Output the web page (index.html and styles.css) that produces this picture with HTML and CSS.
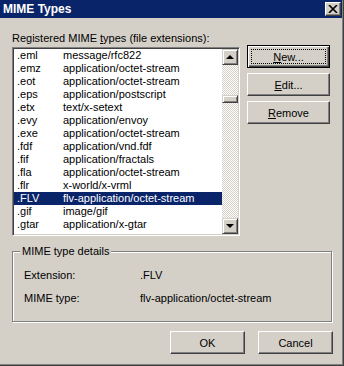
FILE: index.html
```html
<!DOCTYPE html>
<html>
<head>
  <title>MIME Types</title>
  <link rel="stylesheet" href="styles.css">
</head>
<body>
  <div class="window">
    <div class="titlebar">
      <span class="title">MIME Types</span>
      <span class="close-btn">
        <svg width="10" height="8" viewBox="0 0 10 8"><path d="M1 0 L9 8 M9 0 L1 8" stroke="#000" stroke-width="1.6" fill="none"/></svg>
      </span>
    </div>
    <div class="dialog">
      <div class="list-label">Registered MIME <u>t</u>ypes (file extensions):</div>
      <div class="main-row">
        <div class="listbox">
          <div class="rows">
            <div class="row"><span class="ext">.eml</span><span>message/rfc822</span></div>
            <div class="row"><span class="ext">.emz</span><span>application/octet-stream</span></div>
            <div class="row"><span class="ext">.eot</span><span>application/octet-stream</span></div>
            <div class="row"><span class="ext">.eps</span><span>application/postscript</span></div>
            <div class="row"><span class="ext">.etx</span><span>text/x-setext</span></div>
            <div class="row"><span class="ext">.evy</span><span>application/envoy</span></div>
            <div class="row"><span class="ext">.exe</span><span>application/octet-stream</span></div>
            <div class="row"><span class="ext">.fdf</span><span>application/vnd.fdf</span></div>
            <div class="row"><span class="ext">.fif</span><span>application/fractals</span></div>
            <div class="row"><span class="ext">.fla</span><span>application/octet-stream</span></div>
            <div class="row"><span class="ext">.flr</span><span>x-world/x-vrml</span></div>
            <div class="row selected"><span class="ext">.FLV</span><span>flv-application/octet-stream</span></div>
            <div class="row"><span class="ext">.gif</span><span>image/gif</span></div>
            <div class="row"><span class="ext">.gtar</span><span>application/x-gtar</span></div>
          </div>
          <div class="scrollbar">
            <div class="sb-btn"><span class="arrow-up"></span></div>
            <div class="sb-track"><div class="sb-thumb"></div></div>
            <div class="sb-btn"><span class="arrow-down"></span></div>
          </div>
        </div>
        <div class="side-buttons">
          <div class="btn default"><span class="focus"><u>N</u>ew...</span></div>
          <div class="btn"><span><u>E</u>dit...</span></div>
          <div class="btn"><span><u>R</u>emove</span></div>
        </div>
      </div>
      <div class="group">
        <span class="legend">MIME type details</span>
        <div class="detail"><span class="detail-label">Extension:</span><span>.FLV</span></div>
        <div class="detail"><span class="detail-label">MIME type:</span><span>flv-application/octet-stream</span></div>
      </div>
      <div class="footer">
        <div class="btn wide">OK</div>
        <div class="btn wide">Cancel</div>
      </div>
    </div>
  </div>
</body>
</html>
```

FILE: styles.css
```css
body {
  margin: 0;
  padding: 0;
  font-family: "Liberation Sans", Arial, sans-serif;
  font-size: 11px;
  color: #000;
  background-color: #d4d0c8;
}

.window {
  width: 344px;
  height: 366px;
  box-sizing: border-box;
  padding-right: 1px;
  background-color: #d4d0c8;
  border-right: 1px solid #404040;
  border-bottom: 1px solid #404040;
  box-shadow: inset -1px -1px #808080;
  display: flex;
  flex-direction: column;
}

.titlebar {
  height: 18px;
  background-color: #0a246a;
  display: flex;
  justify-content: space-between;
  align-items: center;
  padding-left: 3px;
  padding-right: 1px;
}

.title {
  color: #fff;
  font-weight: bold;
  font-size: 12px;
}

.close-btn {
  width: 14px;
  height: 12px;
  background-color: #d4d0c8;
  border: 1px solid;
  border-color: #fff #404040 #404040 #fff;
  box-shadow: inset -1px -1px #808080;
  display: flex;
  align-items: center;
  justify-content: center;
}

.close-btn svg {
  display: block;
  margin-left: -1px;
}

.dialog {
  padding: 14px 12px 0 12px;
}

.list-label {
  line-height: 13px;
  margin-bottom: 2px;
}

.main-row {
  display: flex;
  gap: 7px;
}

.listbox {
  width: 229px;
  height: 189px;
  box-sizing: border-box;
  border: 1px solid;
  border-color: #808080 #fff #fff #808080;
  box-shadow: inset 1px 1px #404040, inset -1px -1px #d4d0c8;
  padding: 1px;
  display: flex;
  background-color: #fff;
}

.rows {
  flex: 1;
  overflow: hidden;
  background-color: #fff;
}

.row {
  display: flex;
  height: 13px;
  line-height: 13px;
  padding-left: 3px;
  white-space: nowrap;
}

.row .ext {
  width: 46px;
}

.row.selected {
  background-color: #0a246a;
  color: #fff;
}

.scrollbar {
  width: 16px;
  display: flex;
  flex-direction: column;
}

.sb-btn {
  height: 16px;
  box-sizing: border-box;
  background-color: #d4d0c8;
  border: 1px solid;
  border-color: #d4d0c8 #404040 #404040 #d4d0c8;
  box-shadow: inset 1px 1px #fff, inset -1px -1px #808080;
  display: flex;
  align-items: center;
  justify-content: center;
}

.arrow-up {
  width: 0;
  height: 0;
  border-left: 4px solid transparent;
  border-right: 4px solid transparent;
  border-bottom: 4px solid #000;
}

.arrow-down {
  width: 0;
  height: 0;
  border-left: 4px solid transparent;
  border-right: 4px solid transparent;
  border-top: 4px solid #000;
}

.sb-track {
  flex: 1;
  background-color: #fff;
  background-image: conic-gradient(#d4d0c8 25%, #fff 0 50%, #d4d0c8 0 75%, #fff 0);
  background-size: 2px 2px;
  padding-top: 30px;
}

.sb-thumb {
  height: 8px;
  box-sizing: border-box;
  background-color: #d4d0c8;
  border: 1px solid;
  border-color: #d4d0c8 #404040 #404040 #d4d0c8;
  box-shadow: inset 1px 1px #fff, inset -1px -1px #808080;
}

.side-buttons {
  display: flex;
  flex-direction: column;
  gap: 5px;
  margin-top: -2px;
}

.btn {
  width: 83px;
  height: 23px;
  box-sizing: border-box;
  background-color: #d4d0c8;
  border: 1px solid;
  border-color: #fff #404040 #404040 #fff;
  box-shadow: inset -1px -1px #808080;
  display: flex;
  align-items: center;
  justify-content: center;
}

.btn.default {
  border: 1px solid #000;
  box-shadow: inset 1px 1px #fff, inset -1px -1px #404040, inset -2px -2px #808080;
}

.btn .focus {
  flex: 1;
  align-self: stretch;
  margin: 3px;
  border: 1px dotted #000;
  display: flex;
  align-items: center;
  justify-content: center;
}

.group {
  position: relative;
  margin-top: 15px;
  width: 320px;
  height: 71px;
  box-sizing: border-box;
  border: 1px solid #808080;
  box-shadow: inset 1px 1px #fff, 1px 1px #fff;
  padding: 17px 0 0 11px;
}

.legend {
  position: absolute;
  top: -7px;
  left: 7px;
  padding: 0 2px;
  line-height: 13px;
  background-color: #d4d0c8;
}

.detail {
  display: flex;
  line-height: 13px;
  height: 13px;
  margin-bottom: 10px;
}

.detail-label {
  width: 116px;
}

.footer {
  display: flex;
  justify-content: flex-end;
  gap: 13px;
  margin-top: 9px;
  width: 321px;
}

.btn.wide {
  width: 75px;
}
```
